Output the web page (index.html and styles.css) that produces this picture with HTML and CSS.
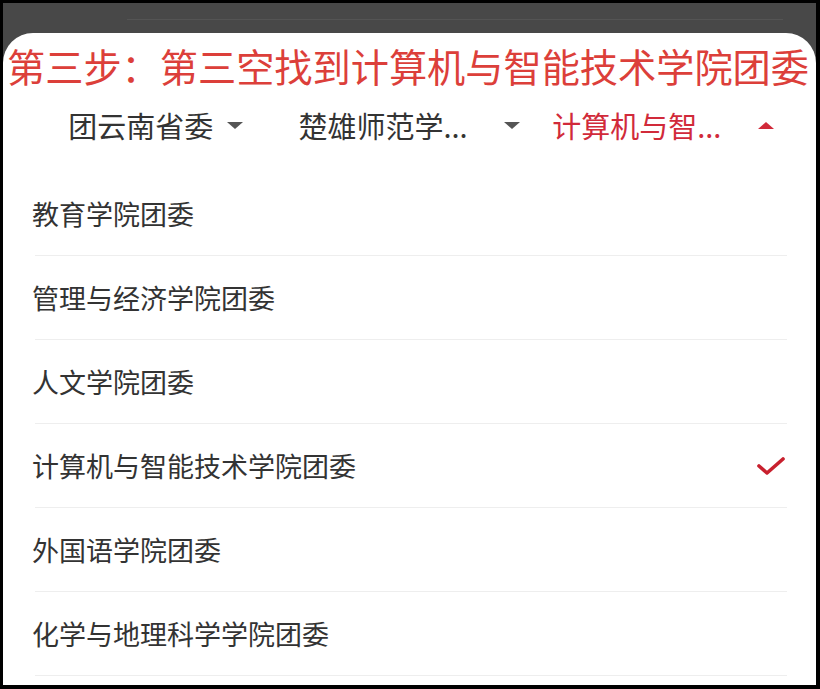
FILE: index.html
```html
<!DOCTYPE html>
<html lang="zh-CN">
<head>
    <meta charset="UTF-8">
    <meta name="viewport" content="width=device-width, initial-scale=1.0">
    <title>选择组织</title>
    <link rel="stylesheet" href="styles.css">
</head>
<body>

<div class="frame">
    <div class="topbar">
        <div class="topline"></div>
    </div>

    <div class="sheet">
        <h2 class="step-title">第三步：第三空找到计算机与智能技术学院团委</h2>

        <div class="tabs">
            <div class="tab">
                <span class="tab-text">团云南省委</span>
                <span class="arrow"></span>
            </div>
            <div class="tab">
                <span class="tab-text fixed">楚雄师范学...</span>
                <span class="arrow"></span>
            </div>
            <div class="tab active">
                <span class="tab-text fixed">计算机与智...</span>
                <span class="arrow up"></span>
            </div>
        </div>

        <ul class="org-list">
            <li><span class="name">教育学院团委</span></li>
            <li><span class="name">管理与经济学院团委</span></li>
            <li><span class="name">人文学院团委</span></li>
            <li class="selected">
                <span class="name">计算机与智能技术学院团委</span>
                <svg class="check" width="28" height="20" viewBox="0 0 28 20">
                    <polyline points="2,10 10,17 26,3" fill="none" stroke="#c8202e" stroke-width="3.6" stroke-linecap="round" stroke-linejoin="round"/>
                </svg>
            </li>
            <li><span class="name">外国语学院团委</span></li>
            <li><span class="name">化学与地理科学学院团委</span></li>
        </ul>
    </div>
</div>

</body>
</html>
```

FILE: styles.css
```css
html, body {
    margin: 0;
    padding: 0;
    background-color: #000;
}
body {
    font-family: "Noto Sans CJK SC", "Noto Sans", sans-serif;
    width: 820px;
    height: 689px;
    overflow: hidden;
}
.frame {
    margin: 3px 4px 0 3px;
    height: 682px;
    background-color: #484848;
    display: flex;
    flex-direction: column;
}
.topbar {
    height: 30px;
    padding-top: 16px;
    box-sizing: border-box;
}
.topline {
    height: 1px;
    margin: 0 33px 0 124px;
    background-color: #545454;
}
.sheet {
    flex: 1;
    background-color: #fff;
    border-radius: 30px 30px 0 0;
    padding-top: 8px;
    overflow: hidden;
}
.step-title {
    margin: 0 0 0 -3px;
    font-size: 38.2px;
    font-weight: normal;
    line-height: 50px;
    color: #dc3f3a;
    text-align: center;
    white-space: nowrap;
}

/* baris pilihan */
.tabs {
    display: grid;
    grid-template-columns: repeat(3, 1fr);
    height: 68px;
    padding: 0 26px;
}
.tab {
    display: flex;
    align-items: center;
    justify-content: center;
    font-size: 29px;
    color: #333;
}
.tab-text {
    white-space: nowrap;
}
.tab-text.fixed {
    width: 192px;
}
.arrow {
    width: 0;
    height: 0;
    margin-left: 14px;
    border-left: 8px solid transparent;
    border-right: 8px solid transparent;
    border-top: 7px solid #555;
}
.arrow.up {
    border-top: none;
    border-bottom: 7px solid #d12a3a;
}
.tab.active {
    color: #d12a3a;
}

/* daftar */
.org-list {
    list-style: none;
    margin: 0 29px 0 32px;
    padding: 13px 0 0;
}
.org-list li {
    display: flex;
    align-items: center;
    justify-content: space-between;
    height: 83px;
    border-bottom: 1px solid #eeeeee;
    font-size: 27px;
    color: #333;
}
.name {
    margin-left: -3px;
}
.check {
    margin-right: 2px;
}
```
